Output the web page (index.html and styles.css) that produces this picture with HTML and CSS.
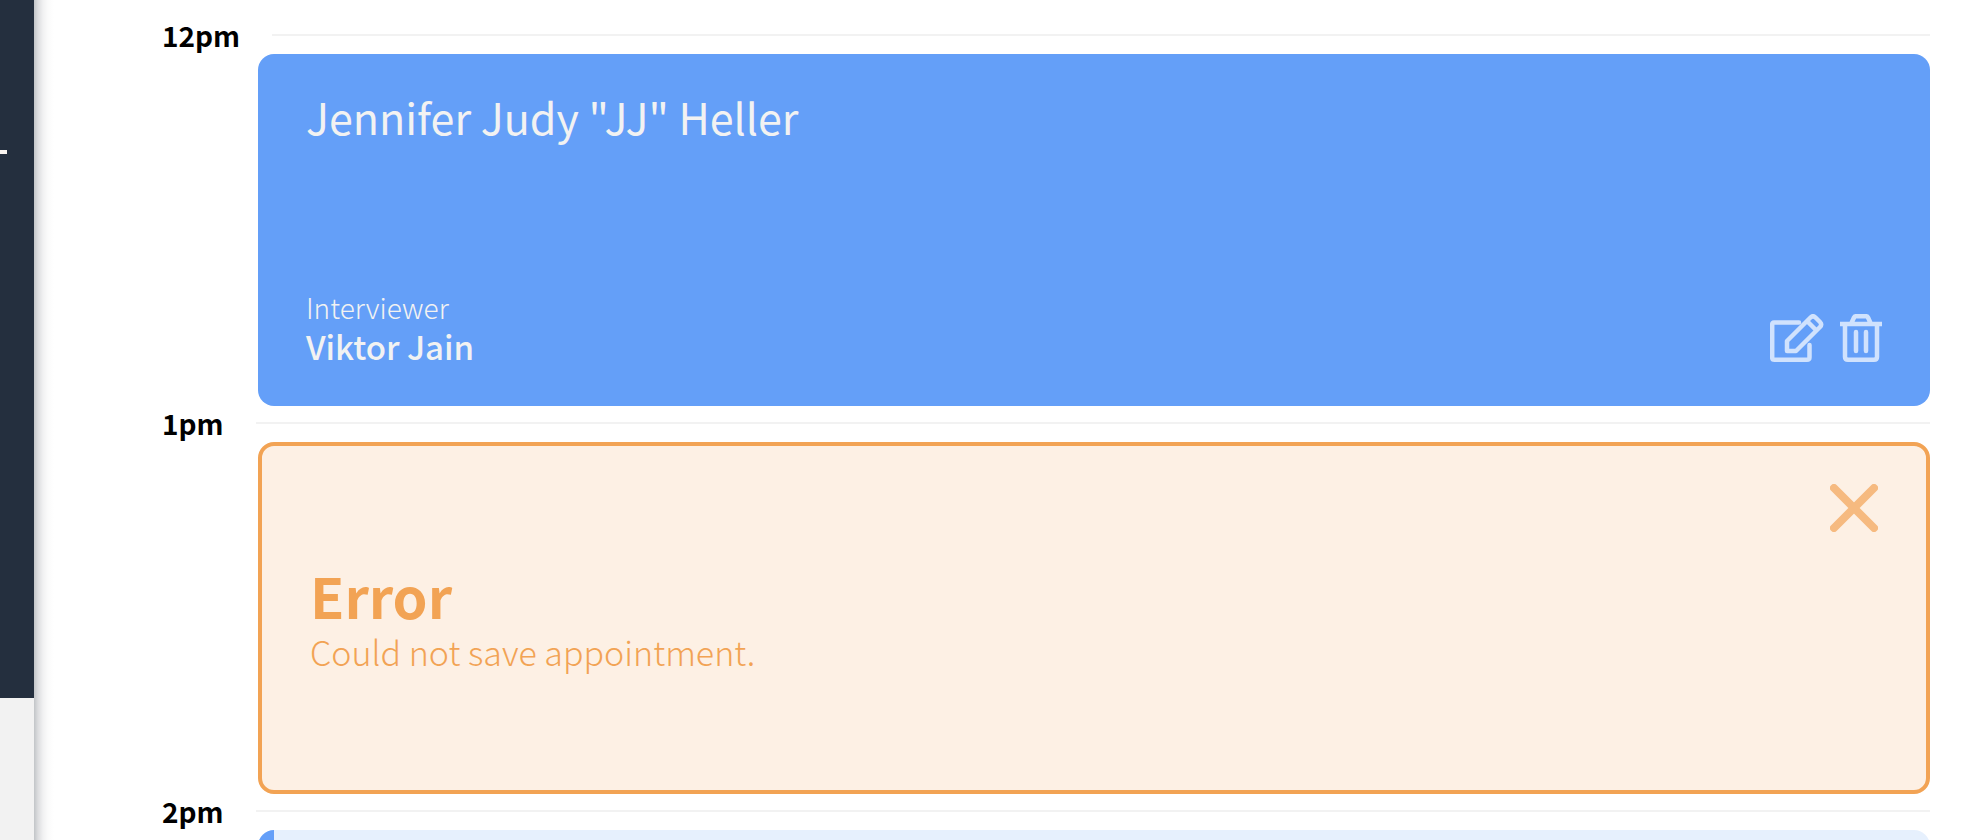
FILE: index.html
```html
<!DOCTYPE html>
<html lang="en">
<head>
<meta charset="utf-8">
<title>Interview Scheduler</title>
<link rel="stylesheet" href="styles.css">
</head>
<body>
<div class="layout">
  <aside class="sidebar"><hr class="sidebar-rule"></aside>
  <main class="schedule">
    <section class="slot">
      <header class="slot-header"><h2 class="slot-time">12pm</h2><hr class="slot-line"></header>
      <article class="card card-show">
        <h3 class="student">Jennifer Judy "JJ" Heller</h3>
        <div class="card-footer">
          <div class="interviewer">
            <h4 class="interviewer-label">Interviewer</h4>
            <p class="interviewer-name">Viktor Jain</p>
          </div>
          <div class="actions">
            <button class="icon-button" type="button" aria-label="Edit">
              <svg width="54" height="48" viewBox="0 0 54 48" fill="none" stroke="currentColor" stroke-width="4.500" stroke-linejoin="round">
                <path d="M29 8.500H4Q2.200 8.500 2.200 10.500V43.500Q2.200 45.700 4.500 45.700H37Q39.500 45.700 39.500 43.500V31" stroke-linecap="round"/>
                <path d="M17 37V27L40.500 3.500Q43 1 45.500 3.500L50 8Q52.500 10.500 50 13L26 37Z"/>
                <path d="M37 7L46.500 16.500"/>
              </svg>
            </button>
            <button class="icon-button" type="button" aria-label="Delete">
              <svg width="42" height="48" viewBox="0 0 42 48" fill="none" stroke="currentColor" stroke-width="4.500" stroke-linejoin="round">
                <path d="M0 10H42M11.500 9L14 3.500Q14.500 2.200 16 2.200H26Q27.500 2.200 28 3.500L30.500 9"/>
                <path d="M5 10V43Q5 45.700 8 45.700H34Q37 45.700 37 43V10"/>
                <path d="M16 18V37M26 18V37" stroke-linecap="round"/>
              </svg>
            </button>
          </div>
        </div>
      </article>
    </section>
    <section class="slot">
      <header class="slot-header"><h2 class="slot-time">1pm</h2><hr class="slot-line"></header>
      <article class="card card-error">
        <div class="error-message">
          <h3 class="error-title">Error</h3>
          <p class="error-text">Could not save appointment.</p>
        </div>
        <button class="icon-button close-button" type="button" aria-label="Close">
          <svg width="48" height="48" viewBox="0 0 48 48" stroke="currentColor" stroke-width="8" stroke-linecap="round">
            <path d="M4 4L44 44M44 4L4 44"/>
          </svg>
        </button>
      </article>
    </section>
    <section class="slot">
      <header class="slot-header"><h2 class="slot-time">2pm</h2><hr class="slot-line"></header>
      <article class="card card-form"></article>
    </section>
  </main>
</div>
</body>
</html>
```
FILE: styles.css
```css
* {
  box-sizing: border-box;
  margin: 0;
  padding: 0;
}

body {
  background: #f2f2f2;
  color: #000;
  font-family: "Noto Sans CJK SC", "Source Sans Pro", sans-serif;
}

.layout {
  display: flex;
  height: 100vh;
  overflow: hidden;
}

.sidebar {
  flex: none;
  width: 34px;
  height: 698px;
  padding-top: 150px;
  background: #242f3e;
}

.sidebar-rule {
  width: 7px;
  height: 4px;
  border: 0;
  background: #f9f4f0;
}

.schedule {
  flex: 1;
  min-width: 0;
  padding: 18px 50px 0 128px;
  background: linear-gradient(to right, #c2c5c8, #dcdddf 4px, #f1f1f2 9px, #fbfbfb 14px, #fff 20px);
}

.slot-header {
  display: flex;
  align-items: center;
  gap: 32px;
  height: 34px;
  margin-bottom: 2px;
}

.slot-time {
  font-size: 28px;
  line-height: 34px;
  font-weight: 700;
}

.slot-line {
  flex: 1;
  height: 2px;
  border: 0;
  background: #f2f2f2;
}

.card {
  display: flex;
  height: 352px;
  margin-left: 96px;
  border-radius: 16px;
}

.card-show {
  flex-direction: column;
  justify-content: space-between;
  padding: 38px 48px;
  background: #649ff8;
  color: #f2f2f2;
}

.student {
  font-size: 43px;
  line-height: 48px;
  font-weight: 400;
}

.card-footer {
  display: flex;
  justify-content: space-between;
  align-items: flex-end;
}

.interviewer-label {
  font-size: 28px;
  line-height: 34px;
  font-weight: 300;
}

.interviewer-name {
  font-size: 33px;
  line-height: 44px;
  font-weight: 500;
}

.actions {
  display: flex;
  gap: 16px;
  padding-bottom: 6px;
}

.icon-button {
  display: block;
  border: 0;
  background: none;
  color: #d0e2fd;
  cursor: pointer;
}

.icon-button svg {
  display: block;
}

.card-error {
  justify-content: space-between;
  align-items: center;
  padding: 38px 48px;
  border: 4px solid #f2a354;
  background: #fdf0e4;
  color: #f2a354;
}

.error-message {
  padding-top: 4px;
}

.error-title {
  font-size: 56px;
  line-height: 64px;
  font-weight: 700;
}

.error-text {
  font-size: 34px;
  line-height: 50px;
  font-weight: 300;
}

.close-button {
  align-self: flex-start;
  color: #f6ba80;
}

.card-form {
  background: linear-gradient(to right, #649ff8 16px, #e6f0fd 16px);
}
```
